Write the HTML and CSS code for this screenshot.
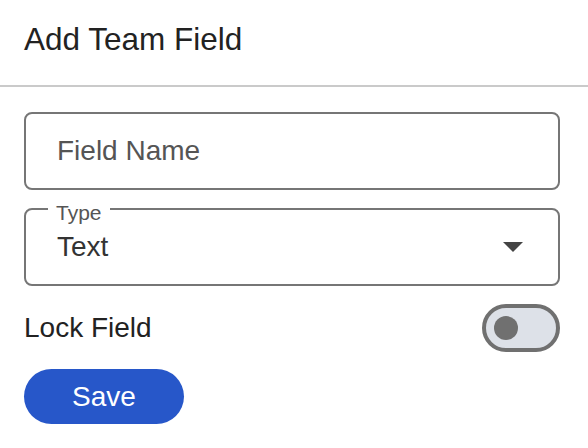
FILE: index.html
```html
<!DOCTYPE html>
<html lang="en">
<head>
<meta charset="utf-8">
<title>Add Team Field</title>
<link rel="stylesheet" href="styles.css">
</head>
<body>
<div class="dialog">
  <header class="dialog-header">
    <h1 class="dialog-title">Add Team Field</h1>
  </header>
  <div class="dialog-body">
    <div class="text-field">
      <span class="placeholder">Field Name</span>
    </div>
    <fieldset class="select-field">
      <legend class="select-label">Type</legend>
      <div class="select-row">
        <span class="select-value">Text</span>
        <svg class="select-arrow" width="20" height="10" viewBox="0 0 20 10"><path d="M0 0 L20 0 L10 10 Z" fill="#444"/></svg>
      </div>
    </fieldset>
    <div class="lock-row">
      <span class="lock-label">Lock Field</span>
      <span class="toggle"><span class="knob"></span></span>
    </div>
    <button class="save-btn" type="button">Save</button>
  </div>
</div>
</body>
</html>
```
FILE: styles.css
```css
html, body {
  margin: 0;
  padding: 0;
  background: #fff;
  font-family: "Liberation Sans", Arial, sans-serif;
}
.dialog {
  width: 588px;
}
.dialog-header {
  padding: 21px 24px 0 24px;
  height: 64px;
  border-bottom: 2px solid #cacaca;
}
.dialog-title {
  margin: 0;
  font-size: 31.5px;
  line-height: 36px;
  font-weight: normal;
  color: #222;
}
.dialog-body {
  padding: 25px 28px 0 24px;
  display: flex;
  flex-direction: column;
}
.text-field {
  box-sizing: border-box;
  height: 78px;
  border: 2px solid #767676;
  border-radius: 8px;
  display: flex;
  align-items: center;
  padding-left: 31px;
}
.placeholder {
  font-size: 28px;
  color: #555;
}
.select-field {
  margin: 3px 0 0 0;
  padding: 0 35px 0 22px;
  border: 2px solid #767676;
  border-radius: 8px;
  min-width: 0;
}
.select-label {
  padding: 8px 8px 0 8px;
  font-size: 21px;
  line-height: 24px;
  color: #555;
}
.select-row {
  display: flex;
  align-items: center;
  justify-content: space-between;
  padding: 6px 0 21px 9px;
  height: 32px;
}
.select-value {
  font-size: 28px;
  line-height: 32px;
  color: #333;
}
.select-arrow {
  display: block;
}
.lock-row {
  margin-top: 18px;
  display: flex;
  align-items: center;
  justify-content: space-between;
}
.lock-label {
  font-size: 28px;
  color: #222;
}
.toggle {
  box-sizing: border-box;
  width: 78px;
  height: 48px;
  border: 4px solid #707070;
  border-radius: 24px;
  background: #dde1e8;
  display: flex;
  align-items: center;
  padding-left: 8px;
}
.knob {
  width: 24px;
  height: 24px;
  border-radius: 50%;
  background: #707070;
}
.save-btn {
  margin-top: 17px;
  width: 160px;
  height: 55px;
  border: none;
  border-radius: 28px;
  background: #2757c9;
  color: #fff;
  font-family: "Liberation Sans", Arial, sans-serif;
  font-size: 28px;
  padding: 0;
}
```
